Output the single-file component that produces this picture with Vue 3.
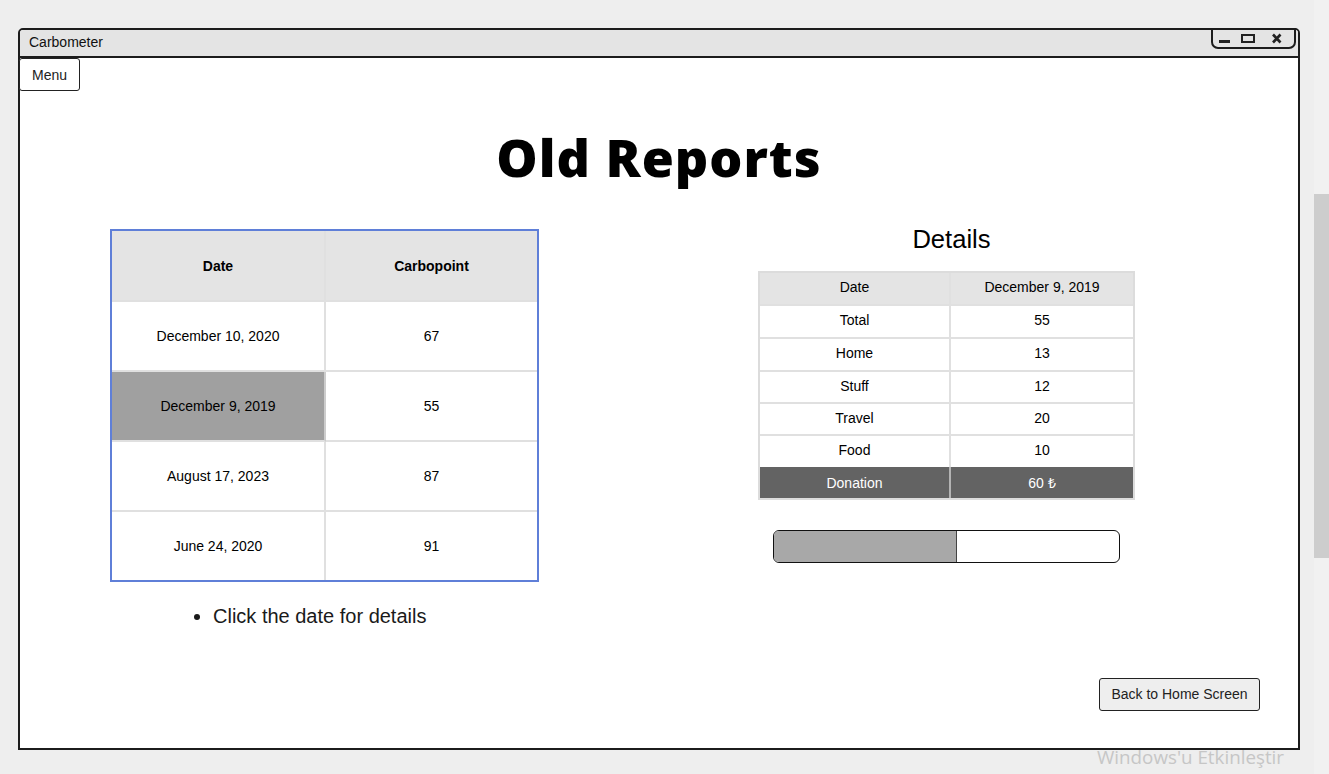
<script setup>
const reports = [
  { date: 'December 10, 2020', points: 67 },
  { date: 'December 9, 2019', points: 55, selected: true },
  { date: 'August 17, 2023', points: 87 },
  { date: 'June 24, 2020', points: 91 },
]
const details = [
  ['Total', '55'],
  ['Home', '13'],
  ['Stuff', '12'],
  ['Travel', '20'],
  ['Food', '10'],
]
</script>

<template>
  <div class="page">
    <div class="window">
      <div class="titlebar">Carbometer</div>
      <div class="controls">
        <svg width="84" height="19" viewBox="0 0 84 19">
          <path d="M7 11.5h11" stroke="#222" stroke-width="3" fill="none" />
          <rect x="30" y="5" width="12" height="7" stroke="#222" stroke-width="2" fill="none" />
          <path d="M61 4.5l7.5 8M68.5 4.5l-7.5 8" stroke="#222" stroke-width="2.6" fill="none" />
        </svg>
      </div>
      <button class="btn menu">Menu</button>
      <h1 class="title">Old Reports</h1>
      <div class="columns">
        <section class="left">
          <table class="reports">
            <thead>
              <tr><th>Date</th><th>Carbopoint</th></tr>
            </thead>
            <tbody>
              <tr v-for="r in reports" :key="r.date">
                <td :class="{ selected: r.selected }">{{ r.date }}</td>
                <td>{{ r.points }}</td>
              </tr>
            </tbody>
          </table>
          <ul class="hint"><li>Click the date for details</li></ul>
        </section>
        <section class="right">
          <h2 class="heading">Details</h2>
          <table class="details">
            <thead>
              <tr><th>Date</th><th>December 9, 2019</th></tr>
            </thead>
            <tbody>
              <tr v-for="d in details" :key="d[0]"><td>{{ d[0] }}</td><td>{{ d[1] }}</td></tr>
              <tr class="donation"><td>Donation</td><td>60 ₺</td></tr>
            </tbody>
          </table>
          <div class="progress"><div class="fill"></div></div>
        </section>
      </div>
      <div class="footer"><button class="btn back">Back to Home Screen</button></div>
    </div>
    <div class="track"><div class="thumb"></div></div>
    <div class="watermark">Windows'u Etkinleştir</div>
  </div>
</template>

<style>
html, body { margin: 0; background: #eeeeee; }
</style>

<style scoped>
.page {
  position: relative;
  box-sizing: border-box;
  height: 774px;
  padding: 28px 29px 24px 18px;
  background: #eeeeee;
  overflow: hidden;
  font-family: "Liberation Sans", Arial, sans-serif;
  color: #000;
}
.window {
  position: relative;
  box-sizing: border-box;
  height: 722px;
  display: flex;
  flex-direction: column;
  background: #fff;
  border: 2px solid #1c1c1c;
  border-radius: 5px 5px 0 0;
}
.titlebar {
  box-sizing: border-box;
  height: 28px;
  flex: none;
  padding-left: 9px;
  line-height: 25px;
  font-size: 14px;
  color: #111;
  background: #e4e4e4;
  border-bottom: 2px solid #1c1c1c;
  border-radius: 3px 3px 0 0;
}
.controls {
  position: absolute;
  top: -2px;
  right: 2px;
  box-sizing: border-box;
  width: 85px;
  height: 21px;
  border: 2px solid #1c1c1c;
  border-radius: 0 0 7px 7px;
  background: #e4e4e4;
}
.controls svg { display: block; margin-left: -1px; }
.btn {
  box-sizing: border-box;
  font-family: inherit;
  font-size: 14px;
  color: #222;
  border: 1px solid #222;
  border-radius: 3px;
  padding: 0;
}
.menu {
  flex: none;
  align-self: flex-start;
  width: 61px;
  height: 33px;
  margin-left: -1px;
  background: #fff;
}
.title {
  flex: none;
  margin: 34px 0 0;
  height: 100px;
  text-align: center;
  font-family: "Open Sans", sans-serif;
  font-weight: 800;
  font-size: 52px;
  line-height: 64px;
  letter-spacing: 1px;
  color: #000;
}
.columns {
  display: grid;
  grid-template-columns: 429px 377px;
  column-gap: 219px;
  padding-left: 90px;
}
.left { padding-top: 4px; }
table {
  border-collapse: separate;
  border-spacing: 0;
  table-layout: fixed;
  font-size: 14px;
  text-align: center;
}
.reports {
  box-sizing: border-box;
  width: 429px;
  height: 353px;
  border: 2px solid #5f7fd8;
}
.reports th, .reports td {
  height: 70px;
  padding: 0;
  box-sizing: border-box;
  border-right: 2px solid #e0e0e0;
  border-bottom: 2px solid #e0e0e0;
}
.reports th { height: 71px; background: #e4e4e4; font-weight: 700; }
.reports th:first-child, .reports td:first-child { width: 214px; }
.reports tr > :last-child { border-right: 0; }
.reports tbody tr:last-child td { border-bottom: 0; height: 68px; }
.reports .selected { background: #a0a0a0; border-right-color: #cccccc; }
.hint {
  margin: 22px 0 0;
  padding: 0 0 0 103px;
  font-size: 20px;
  line-height: 24px;
  color: #1a1a1a;
}
.heading {
  margin: 0 0 18px;
  height: 28px;
  line-height: 28px;
  text-align: center;
  font-size: 25.6px;
  font-weight: 400;
  padding-left: 10px;
}
.details {
  box-sizing: border-box;
  width: 377px;
  border: 2px solid #dcdcdc;
}
.details th, .details td {
  box-sizing: border-box;
  padding: 0 0 3px;
  height: 33px;
  line-height: 16px;
  border-right: 2px solid #e0e0e0;
  border-bottom: 2px solid #e0e0e0;
  font-weight: 400;
}
.details th:first-child, .details td:first-child { width: 191px; }
.details tr > :last-child { border-right: 0; }
.details th { background: #e4e4e4; }
.details tbody tr:nth-child(3) td { height: 32px; padding-bottom: 2px; }
.details tbody tr:nth-child(4) td { height: 32px; }
.details tbody tr:nth-child(5) td { height: 31px; padding-bottom: 3px; border-bottom: 0; }
.details .donation td {
  height: 31px;
  padding: 0;
  background: #636363;
  color: #fff;
  border-bottom: 0;
  border-right-color: #b4b4b4;
}
.progress {
  box-sizing: border-box;
  width: 347px;
  height: 33px;
  margin: 30px 0 0 15px;
  border: 1px solid #111;
  border-radius: 6px;
  overflow: hidden;
  background: #fff;
}
.fill {
  box-sizing: border-box;
  width: 183px;
  height: 100%;
  background: #a8a8a8;
  border-right: 1px solid #444;
}
.footer {
  margin-top: auto;
  display: flex;
  justify-content: flex-end;
  padding: 0 38px 37px 0;
}
.back {
  width: 161px;
  height: 33px;
  background: #eeeeee;
  padding-bottom: 2px;
}
.track {
  position: absolute;
  top: 0;
  right: 0;
  width: 15px;
  height: 774px;
  background: #f1f1f1;
}
.thumb {
  margin-top: 194px;
  height: 364px;
  background: #cdcdcd;
}
.watermark {
  position: absolute;
  left: 1097px;
  top: 745px;
  font-family: "Open Sans", sans-serif;
  font-size: 18.8px;
  line-height: 25px;
  color: #c6c6c6;
  white-space: nowrap;
}
</style>
